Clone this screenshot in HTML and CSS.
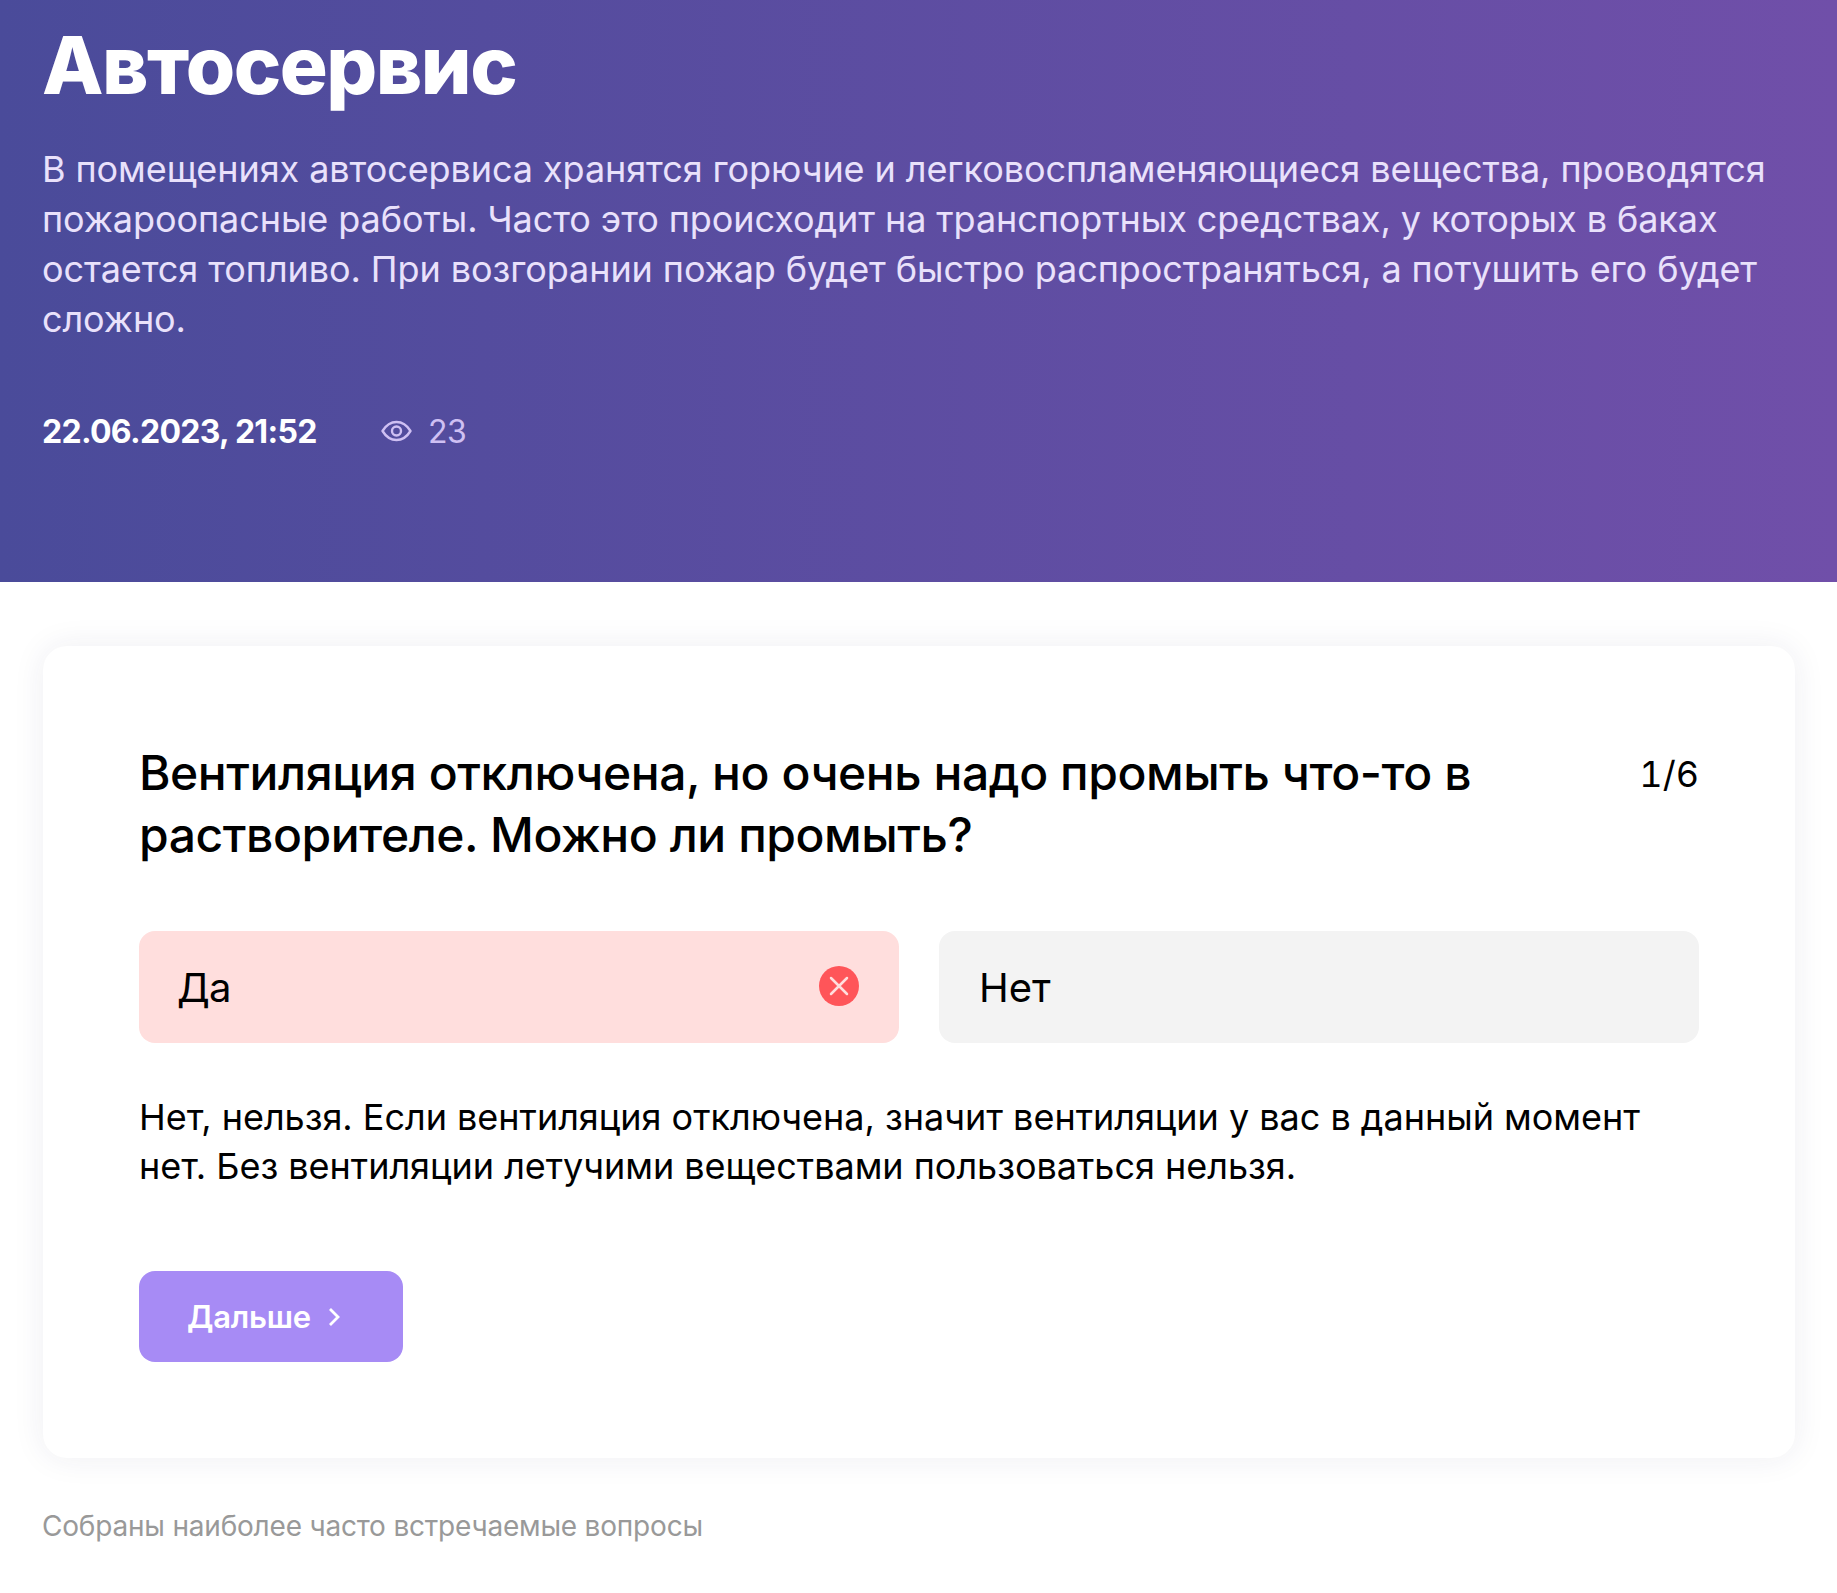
FILE: index.html
```html
<!DOCTYPE html>
<html lang="ru">
<head>
  <meta charset="UTF-8" />
  <meta name="viewport" content="width=device-width, initial-scale=1.0"/>
  <title>Автосервис</title>
  <link rel="stylesheet" href="styles.css">
</head>
<body>
  <header class="hero">
    <h1>Автосервис</h1>
    <p class="lead">В помещениях автосервиса хранятся горючие и легковоспламеняющиеся вещества, проводятся пожароопасные работы. Часто это происходит на транспортных средствах, у которых в баках остается топливо. При возгорании пожар будет быстро распространяться, а потушить его будет сложно.</p>
    <div class="meta">
      <span class="date">22.06.2023, 21:52</span>
      <span class="views">
        <svg class="eye" width="31" height="30" viewBox="0 0 31 30" fill="none" stroke="currentColor" stroke-width="2.400">
          <path d="M1.500 15C5.500 8.500 10 6 15.500 6S25.500 8.500 29.500 15c-4 6.500-8.500 9-14 9S5.500 21.500 1.500 15z" stroke-linejoin="round"/>
          <circle cx="15.500" cy="15" r="4.500"/>
        </svg>
        23
      </span>
    </div>
  </header>

  <main class="content">
    <section class="card">
      <div class="question">
        <h2>Вентиляция отключена, но очень надо промыть что-то в растворителе. Можно ли промыть?</h2>
        <span class="counter">1/6</span>
      </div>
      <div class="answers">
        <div class="answer wrong">
          <span class="answer-text">Да</span>
          <svg class="mark" width="40" height="40" viewBox="0 0 40 40">
            <circle cx="20" cy="20" r="20" fill="#ff5559"/>
            <path d="M12 12l16 16M28 12L12 28" stroke="#ffdedd" stroke-width="2.500" stroke-linecap="round"/>
          </svg>
        </div>
        <div class="answer">Нет</div>
      </div>
      <p class="explain">Нет, нельзя. Если вентиляция отключена, значит вентиляции у вас в данный момент нет. Без вентиляции летучими веществами пользоваться нельзя.</p>
      <button class="next" type="button">
        Дальше
        <svg width="14" height="20" viewBox="0 0 14 20" fill="none" stroke="#fff" stroke-width="2.800">
          <path d="M2 2l8 8-8 8"/>
        </svg>
      </button>
    </section>
    <p class="note">Собраны наиболее часто встречаемые вопросы</p>
  </main>
</body>
</html>
```

FILE: styles.css
```css
body { margin: 0; font-family: Inter, "Noto Sans", sans-serif; background: #fff; color: #000; }

.hero { height: 582px; box-sizing: border-box; padding: 18px 42px 0; background: linear-gradient(90deg, #4a4b9a 0%, #704fa9 100%); color: #fff; }
.hero h1 { margin: 0; font-size: 80px; line-height: 94px; font-weight: 800; letter-spacing: -1.5px; }
.lead { margin: 32px 0 0; font-size: 36px; line-height: 50px; letter-spacing: -0.08px; color: #e9e1fb; }
.meta { display: flex; align-items: center; margin-top: 63px; font-size: 32px; line-height: 50px; }
.date { font-weight: 700; letter-spacing: -0.7px; width: 355px; margin-right: -16px; }
.views { display: flex; align-items: center; gap: 16px; color: #cfc0f3; letter-spacing: -0.5px; }
.eye { margin-top: -2px; }

.content { padding: 64px 42px 0 43px; }
.card { padding: 96px; border-radius: 24px; box-shadow: 0 0 32px rgba(40, 40, 90, 0.08); }
.question { display: flex; justify-content: space-between; gap: 100px; }
.question h2 { margin: 0; font-size: 48px; line-height: 62px; font-weight: 500; letter-spacing: -0.43px; }
.counter { padding-top: 1px; font-size: 36px; line-height: 62px; font-variant-numeric: tabular-nums; }
.answers { display: flex; gap: 40px; margin-top: 65px; }
.answer { flex: 1; display: flex; align-items: center; justify-content: space-between; height: 112px; padding: 0 40px; border-radius: 16px; background: #f3f3f3; font-size: 40px; }
.answer.wrong { background: #ffdedd; }
.answer-text { margin-left: -2px; letter-spacing: -0.8px; }
.mark { margin-top: -2px; }
.explain { margin: 50px 0 0; font-size: 36px; line-height: 49px; letter-spacing: -0.02px; }
.next { display: flex; align-items: center; gap: 17px; margin-top: 80px; height: 91px; padding: 0 61px 0 48px; border: 0; border-radius: 16px; background: #a78bf5; color: #fff; font: 600 31px Inter, sans-serif; letter-spacing: -0.2px; }
.note { margin: 51px 0 0 -1px; font-size: 28px; letter-spacing: -0.2px; color: #999; }
```
